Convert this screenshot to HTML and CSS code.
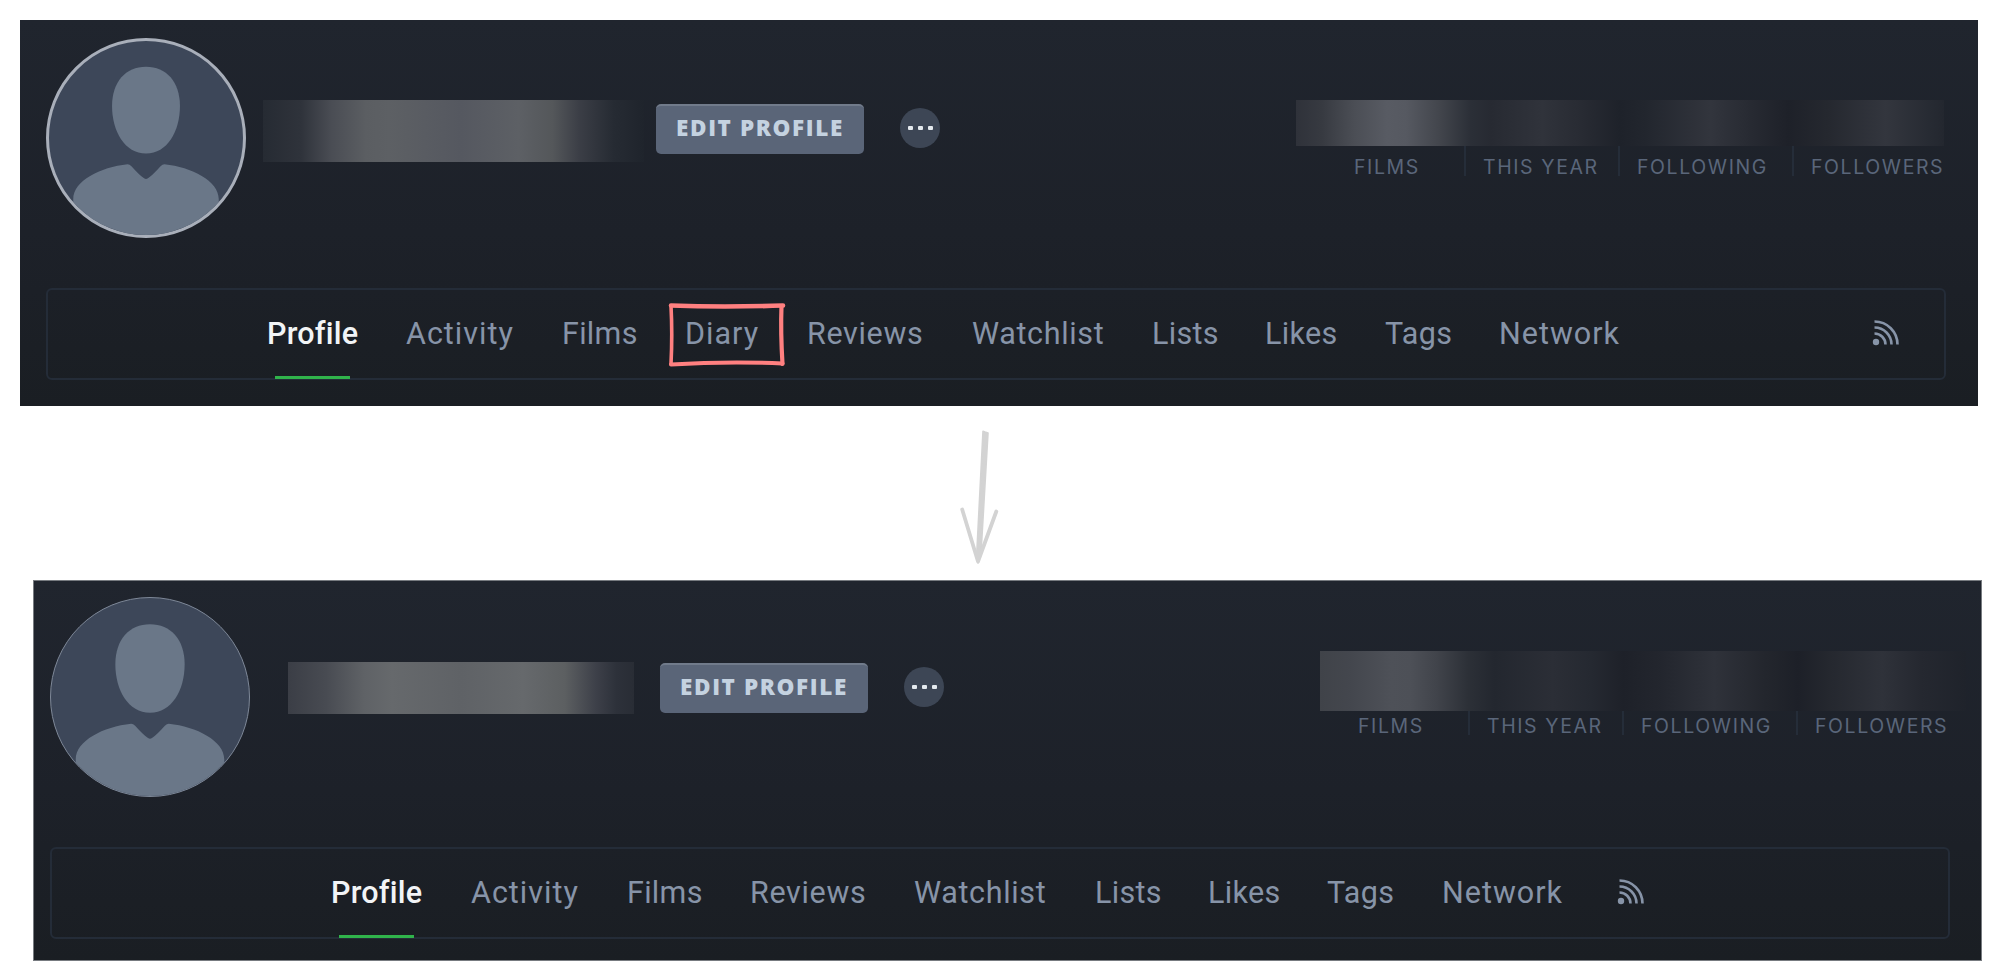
FILE: index.html
```html
<!DOCTYPE html>
<html lang="en">
<head>
<meta charset="utf-8">
<title>Profile navigation</title>
<link rel="stylesheet" href="styles.css">
</head>
<body>
<svg class="defs" width="0" height="0" aria-hidden="true">
  <symbol id="person" viewBox="0 0 200 200">
    <path d="M100 26.500C121 26.500 135 42 135 67C135 93 122 116 100 116C78 116 65 93 65 67C65 42 79 26.500 100 26.500Z"/>
    <path d="M81 127Q83 127 85 129Q93 138 98 141.500Q100 143 102 141.500Q107 138 115 129Q117 127 119 127C147 130 175 144 175 163V200H25V163C25 144 53 130 81 127Z"/>
  </symbol>
  <symbol id="rss" viewBox="0 0 28 28">
    <circle cx="5" cy="23" r="3.200" fill="currentColor"/>
    <path d="M3.500 14.500A11 11 0 0 1 14.500 25.500M3.500 8.500A17 17 0 0 1 20.500 25.500M3.500 2.500A23 23 0 0 1 26.500 25.500" fill="none" stroke="currentColor" stroke-width="2.600"/>
  </symbol>
</svg>

<section class="panel panel-before">
  <header class="head">
    <svg class="avatar"><use href="#person"/></svg>
    <div class="name-blur"></div>
    <button class="edit">EDIT PROFILE</button>
    <div class="more"><i></i><i></i><i></i></div>
    <div class="stats">
      <div class="stats-blur"></div>
      <div class="labels"><span>FILMS</span><span>THIS YEAR</span><span>FOLLOWING</span><span>FOLLOWERS</span></div>
    </div>
  </header>
  <nav class="nav">
    <a class="active">Profile</a><a class="wide">Activity</a><a>Films</a><a class="wide">Diary<svg class="mark" viewBox="0 0 118 66"><path d="M3 3.500Q55 5.500 115 3.500" stroke-width="4.600"/><path d="M113.500 4Q112.500 30 114.500 62" stroke-width="4.200"/><path d="M114.500 61.500Q60 59 3 62.500" stroke-width="4"/><path d="M3 62Q4.500 32 3 4" stroke-width="3.600"/></svg></a><a class="mid">Reviews</a><a class="mid">Watchlist</a><a>Lists</a><a>Likes</a><a>Tags</a><a class="wide">Network</a><svg class="rss"><use href="#rss"/></svg>
  </nav>
</section>

<svg class="arrow" viewBox="0 0 40 140"><path class="shaft" d="M23 5.200L25 6L28 7L21 127L18 137L16.800 127Z"/><path d="M2.200 83.500L18 135.500L36.300 85.500" stroke-width="3.800"/></svg>

<section class="panel panel-after">
  <header class="head">
    <svg class="avatar"><use href="#person"/></svg>
    <div class="name-blur"></div>
    <button class="edit">EDIT PROFILE</button>
    <div class="more"><i></i><i></i><i></i></div>
    <div class="stats">
      <div class="stats-blur"></div>
      <div class="labels"><span>FILMS</span><span>THIS YEAR</span><span>FOLLOWING</span><span>FOLLOWERS</span></div>
    </div>
  </header>
  <nav class="nav">
    <a class="active">Profile</a><a class="wide">Activity</a><a>Films</a><a class="mid">Reviews</a><a class="mid">Watchlist</a><a>Lists</a><a>Likes</a><a>Tags</a><a class="wide">Network</a><svg class="rss"><use href="#rss"/></svg>
  </nav>
</section>
</body>
</html>
```
FILE: styles.css
```css
* { box-sizing: border-box; }
body {
  margin: 0;
  padding-top: 20px;
  height: 980px;
  overflow: hidden;
  background: #fff;
  font-family: Roboto, "Liberation Sans", sans-serif;
}
.defs { position: absolute; }
.panel {
  background: linear-gradient(#20252e, #1d2129 55%, #1a1e23);
}
.panel-before { width: 1958px; height: 386px; margin-left: 20px; padding: 18px 32px 0 26px; }
.panel-after { width: 1949px; height: 381px; margin-left: 33px; padding: 16px 31px 0 16px; border: 1px solid #777b80; }

.head { display: flex; align-items: flex-start; height: 250px; }
.avatar {
  flex: none;
  width: 200px;
  height: 200px;
  border-radius: 50%;
  background: #3d4759;
  fill: #6a7788;
}
.panel-before .avatar { border: 3px solid #a9afba; }
.panel-after .avatar { border: 1.500px solid #7e8898; }

.name-blur { flex: none; }
.panel-before .name-blur {
  width: 381px; height: 62px; margin: 62px 0 0 17px;
  background: linear-gradient(90deg, #262b33, #2f333b 10%, #4a4d54 18%, #5b5e62 27%, #5d6064 33%, #555860 52%, #5d6065 67%, #54575a 76%, #3b3e46 83%, #262b33 92%, #1f242c);
}
.panel-after .name-blur {
  width: 346px; height: 52px; margin: 65px 0 0 38px;
  background: linear-gradient(90deg, #3b3e46, #484b52 11%, #5f6266 22%, #66696c 30%, #5f6266 50%, #66696c 68%, #5c5f61 80%, #3d4049 89%, #2d313a 95%, #292d35);
}

.edit {
  flex: none;
  width: 208px;
  height: 50px;
  margin: 66px 0 0 12px;
  padding: 0 0 5px;
  border: 0;
  border-top: 2px solid #717b8b;
  border-radius: 5px;
  background: #5a6578;
  color: #c4d2e0;
  font: 800 22.500px/43px "Open Sans", sans-serif;
  letter-spacing: 1.600px;
  white-space: nowrap;
}
.panel-after .edit { margin-left: 26px; }
.more {
  flex: none;
  display: flex;
  align-items: center;
  justify-content: center;
  gap: 5px;
  width: 40px;
  height: 40px;
  margin: 70px 0 0 36px;
  border-radius: 50%;
  background: #3d4655;
}
.more i { width: 5px; height: 4px; border-radius: 1px; background: #e4e9ee; }

.stats { flex: none; }
.panel-before .stats { width: 648px; margin: 62px 0 0 356px; }
.panel-after .stats { width: 646px; margin: 54px 0 0 376px; }
.stats-blur { height: 46px; }
.panel-before .stats-blur {
  background: linear-gradient(90deg, #2f323a, #373a41 4%, #4b4e55 9%, #585b63 14%, #565961 17%, #43464d 22%, #2b2f37 27%, #272a32 30%, #30333b 38%, #282b33 44%, #1e222a 50%, #22262e 54%, #32353d 64%, #24272f 72%, #1e2129 76%, #25282f 82%, #33363e 91%, #23272f);
}
.panel-after .stats-blur {
  height: 60px;
  background: linear-gradient(90deg, #404349, #44474e 5%, #4e5158 11%, #4d5057 14%, #41444b 18%, #2c3037 23%, #23272f 27%, #2b2e36 36%, #252931 42%, #1e2129 47%, #23262e 53%, #2f323a 61%, #23262d 69%, #1d2028 74%, #25282f 79%, #2f323a 87%, #252830 93%, #1f232b);
}
.labels {
  display: grid;
  color: #5a667a;
  font: 400 19.500px/30px Inter, sans-serif;
  letter-spacing: 1.600px;
  white-space: nowrap;
}
.panel-before .labels { grid: 30px / 168px 154px 174px 152px; line-height: 42px; }
.panel-after .labels { grid: 24px / 148px 154px 174px 170px; line-height: 30px; }
.labels span + span { padding-left: 17px; border-left: 2px solid #252d39; }
.panel-before .labels span:first-child { padding-left: 58px; }
.panel-after .labels span:first-child { padding-left: 38px; }

.nav {
  display: grid;
  height: 92px;
  border: 2px solid #242c38;
  border-radius: 6px;
  color: #8794a8;
  font-size: 30.500px;
  line-height: 88px;
  letter-spacing: 0.300px;
}
.panel-before .nav { padding-left: 219px; grid: 88px / 139px 156px 123px 122px 165px 180px 113px 120px 114px 372px 28px; }
.panel-after .nav { padding-left: 279px; grid: 88px / 140px 156px 123px 164px 181px 113px 119px 115px 174px 28px; }
.nav a { position: relative; white-space: nowrap; }
.nav .wide { letter-spacing: 1px; }
.nav .mid { letter-spacing: 0.650px; }
.nav .active { color: #f2f4f6; font-weight: 500; letter-spacing: 0.200px; }
.nav .active::after {
  content: "";
  position: absolute;
  left: 8px;
  bottom: -1px;
  width: 75px;
  height: 3px;
  background: #30b34b;
}
.rss { width: 28px; height: 28px; margin-top: 29px; }
.mark {
  position: absolute;
  left: -17px;
  top: 12px;
  width: 118px;
  height: 66px;
  fill: none;
  stroke: #ff8080;
  stroke-linecap: round;
}
.arrow {
  display: block;
  width: 40px;
  height: 140px;
  margin: 20px 0 14px 960px;
  fill: none;
  stroke: #d3d3d3;
  stroke-linecap: round;
  stroke-linejoin: round;
}
.arrow .shaft { fill: #d3d3d3; stroke-width: 1.600px; }
```
